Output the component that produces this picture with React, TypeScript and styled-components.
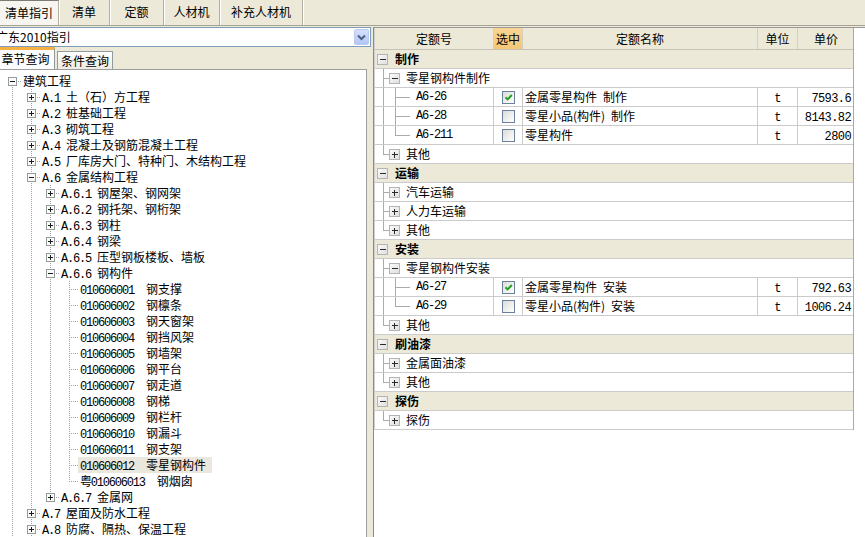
import React from "react"
import styled, { createGlobalStyle, css } from "styled-components"

const CJK = `"Noto Sans CJK SC", "Liberation Sans", sans-serif`
const MONO = `"Liberation Mono", "DejaVu Sans Mono", "Noto Sans CJK SC", monospace`

const GlobalStyle = createGlobalStyle`
  html, body {
    margin: 0;
    padding: 0;
    background: #ece9d8;
  }
  body {
    font-family: ${CJK};
    font-size: 12px;
    color: #000;
  }
`

/* ---------- data ---------- */

type TNode = {
  code?: string
  gap?: number
  name: string
  closed?: boolean
  kids?: TNode[]
  more?: boolean
  selected?: boolean
}

const leaf = (code: string, name: string, selected?: boolean): TNode => ({ code, name, gap: 12, selected })

const leftTree: TNode[] = [
  {
    name: "建筑工程",
    more: true,
    kids: [
      { code: "A.1", name: "土（石）方工程", closed: true },
      { code: "A.2", name: "桩基础工程", closed: true },
      { code: "A.3", name: "砌筑工程", closed: true },
      { code: "A.4", name: "混凝土及钢筋混凝土工程", closed: true },
      { code: "A.5", name: "厂库房大门、特种门、木结构工程", closed: true },
      {
        code: "A.6",
        name: "金属结构工程",
        kids: [
          { code: "A.6.1", name: "钢屋架、钢网架", closed: true },
          { code: "A.6.2", name: "钢托架、钢桁架", closed: true },
          { code: "A.6.3", name: "钢柱", closed: true },
          { code: "A.6.4", name: "钢梁", closed: true },
          { code: "A.6.5", name: "压型钢板楼板、墙板", closed: true },
          {
            code: "A.6.6",
            name: "钢构件",
            kids: [
              leaf("010606001", "钢支撑"),
              leaf("010606002", "钢檩条"),
              leaf("010606003", "钢天窗架"),
              leaf("010606004", "钢挡风架"),
              leaf("010606005", "钢墙架"),
              leaf("010606006", "钢平台"),
              leaf("010606007", "钢走道"),
              leaf("010606008", "钢梯"),
              leaf("010606009", "钢栏杆"),
              leaf("010606010", "钢漏斗"),
              leaf("010606011", "钢支架"),
              leaf("010606012", "零星钢构件", true),
              leaf("粤010606013", "钢烟囱"),
            ],
          },
          { code: "A.6.7", name: "金属网", closed: true },
        ],
      },
      { code: "A.7", name: "屋面及防水工程", closed: true },
      { code: "A.8", name: "防腐、隔热、保温工程", closed: true },
    ],
  },
]

type Flat = { n: TNode; pipes: boolean[]; last: boolean; first: boolean }

function flatten(list: TNode[], pipes: boolean[], more: boolean): Flat[] {
  const out: Flat[] = []
  list.forEach((n, i) => {
    const last = i === list.length - 1 && !more
    out.push({ n, pipes, last, first: pipes.length === 0 && i === 0 })
    if (n.kids) out.push(...flatten(n.kids, [...pipes, !last], !!n.more))
  })
  return out
}

type RRow =
  | { t: "group"; name: string }
  | { t: "sub"; name: string; open?: boolean; last?: boolean }
  | { t: "leaf"; code: string; name: string; checked?: boolean; unit: string; price: string; pipe: boolean; last?: boolean }

const rightRows: RRow[] = [
  { t: "group", name: "制作" },
  { t: "sub", name: "零星钢构件制作", open: true },
  { t: "leaf", code: "A6-26", name: "金属零星构件\u2002制作", checked: true, unit: "t", price: "7593.6", pipe: true },
  { t: "leaf", code: "A6-28", name: "零星小品(构件)\u2002制作", unit: "t", price: "8143.82", pipe: true },
  { t: "leaf", code: "A6-211", name: "零星构件", unit: "t", price: "2800", pipe: true, last: true },
  { t: "sub", name: "其他", last: true },
  { t: "group", name: "运输" },
  { t: "sub", name: "汽车运输" },
  { t: "sub", name: "人力车运输" },
  { t: "sub", name: "其他", last: true },
  { t: "group", name: "安装" },
  { t: "sub", name: "零星钢构件安装", open: true },
  { t: "leaf", code: "A6-27", name: "金属零星构件\u2002安装", checked: true, unit: "t", price: "792.63", pipe: true },
  { t: "leaf", code: "A6-29", name: "零星小品(构件)\u2002安装", unit: "t", price: "1006.24", pipe: true, last: true },
  { t: "sub", name: "其他", last: true },
  { t: "group", name: "刷油漆" },
  { t: "sub", name: "金属面油漆" },
  { t: "sub", name: "其他", last: true },
  { t: "group", name: "探伤" },
  { t: "sub", name: "探伤", last: true },
]

const topTabs = [
  { label: "清单指引", w: 59 },
  { label: "清单", w: 51 },
  { label: "定额", w: 54 },
  { label: "人材机", w: 56 },
  { label: "补充人材机", w: 83 },
]

/* ---------- small drawings ---------- */

const TreeBox9 = ({ open }: { open: boolean }) => (
  <svg width="9" height="9" viewBox="0 0 9 9" shapeRendering="crispEdges">
    <rect x="0.5" y="0.5" width="8" height="8" fill="#fbfbf9" stroke="#919b9c" />
    <path d="M2 4.5h5" stroke="#1b1b1b" />
    {!open && <path d="M4.5 2v5" stroke="#1b1b1b" />}
  </svg>
)

const GridBox = ({ open }: { open: boolean }) => (
  <svg width="11" height="11" viewBox="0 0 11 11" shapeRendering="crispEdges">
    <defs>
      <linearGradient id="gbx" x1="0" y1="0" x2="1" y2="1">
        <stop offset="0" stopColor="#fbfbfb" />
        <stop offset="1" stopColor="#dedede" />
      </linearGradient>
    </defs>
    <rect x="0.5" y="0.5" width="10" height="10" fill="url(#gbx)" stroke="#b4b4b4" />
    <path d="M2.5 5.5h6" stroke="#2a2a2a" />
    {!open && <path d="M5.5 2.5v6" stroke="#2a2a2a" />}
  </svg>
)

const Check = () => (
  <svg width="11" height="11" viewBox="0 0 11 11">
    <path d="M2.5 5.2 L4.6 7.4 L8.8 3" fill="none" stroke="#21a121" strokeWidth="2" />
  </svg>
)

const Chevron = () => (
  <svg width="9" height="7" viewBox="0 0 9 7">
    <path d="M1 1.5 L4.5 5 L8 1.5" fill="none" stroke="#4d6185" strokeWidth="2" />
  </svg>
)

/* ---------- layout ---------- */

const Page = styled.div`
  width: 865px;
  height: 537px;
  display: flex;
  flex-direction: column;
  background: #ece9d8;
  overflow: hidden;
`

const TopBar = styled.div`
  display: flex;
  height: 26px;
  box-sizing: border-box;
  border-bottom: 1px solid #a5a296;
`

const TopTab = styled.div<{ $w: number; $active?: boolean }>`
  width: ${(p) => p.$w}px;
  flex-shrink: 0;
  box-sizing: border-box;
  border-right: 1px solid #b3b0a3;
  box-shadow: 1px 0 0 #fff;
  text-align: center;
  line-height: 24px;
  font-size: 12px;
  ${(p) =>
    p.$active &&
    css`
      background: #f6f5ef;
      border-top: 1px solid #7d7b72;
      line-height: 23px;
    `}
`

const Body = styled.div`
  flex: 1;
  display: flex;
  padding-top: 1px;
  min-height: 0;
`

const LeftPane = styled.div`
  width: 371px;
  flex-shrink: 0;
  display: flex;
  flex-direction: column;
`

const Combo = styled.div`
  height: 20px;
  box-sizing: border-box;
  border: 1px solid #7f9db9;
  border-left: none;
  background: #fff;
  display: flex;
  align-items: center;
  overflow: hidden;
`

const ComboText = styled.span`
  flex: 1;
  margin-left: -4px;
  line-height: 18px;
  white-space: nowrap;
`

const ComboButton = styled.span`
  width: 15px;
  height: 16px;
  margin-right: 1px;
  box-sizing: border-box;
  border: 1px solid #b9c9ef;
  border-radius: 2px;
  background: linear-gradient(#d6e0fc, #b2c6f6);
  display: flex;
  align-items: center;
  justify-content: center;
`

const SubTabs = styled.div`
  height: 22px;
  display: flex;
  align-items: flex-end;
`

const SubTab = styled.div<{ $active?: boolean }>`
  box-sizing: border-box;
  text-align: center;
  font-size: 12px;
  ${(p) =>
    p.$active
      ? css`
          width: 58px;
          height: 22px;
          margin-left: -3px;
          background: #fcfcfe;
          border-top: 3px solid #f5b143;
          border-right: 1px solid #919b9c;
          line-height: 18px;
        `
      : css`
          width: 56px;
          height: 18px;
          margin-left: 2px;
          background: linear-gradient(#fefefe, #ecebe5);
          border: 1px solid #919b9c;
          border-bottom: none;
          line-height: 17px;
        `}
`

const TreeBox = styled.div`
  flex: 1;
  width: 367px;
  box-sizing: border-box;
  background: #fff;
  border-top: 1px solid #9d9d9d;
  border-right: 1px solid #9d9d9d;
  padding: 3px 0 0 3px;
  overflow: hidden;
`

const TreeRow = styled.div`
  display: flex;
  height: 16px;
  align-items: center;
  white-space: nowrap;
`

const dotColor = "#a3a3a3"
const vDots = `repeating-linear-gradient(to bottom, ${dotColor} 0 1px, transparent 1px 2px)`
const hDots = `repeating-linear-gradient(to right, ${dotColor} 0 1px, transparent 1px 2px)`

type GuideKind = "none" | "pipe" | "tee" | "elbow" | "first"

const dottedGuides: Record<GuideKind, string> = {
  none: "none",
  pipe: `${vDots} 9px 0 / 1px 100% no-repeat`,
  tee: `${vDots} 9px 0 / 1px 100% no-repeat, ${hDots} 9px 8px / 10px 1px no-repeat`,
  elbow: `${vDots} 9px 0 / 1px 9px no-repeat, ${hDots} 9px 8px / 10px 1px no-repeat`,
  first: `${vDots} 9px 8px / 1px 8px no-repeat, ${hDots} 9px 8px / 10px 1px no-repeat`,
}

const Guide = styled.span<{ $kind: GuideKind }>`
  width: 19px;
  height: 16px;
  flex-shrink: 0;
  display: flex;
  align-items: center;
  background: ${(p) => dottedGuides[p.$kind]};
  svg {
    margin-left: 5px;
    display: block;
  }
`

const Label = styled.span<{ $selected?: boolean }>`
  margin-left: -1px;
  padding: 0 6px 0 2px;
  line-height: 16px;
  height: 16px;
  background: ${(p) => (p.$selected ? "#eae8de" : "transparent")};
`

const Code = styled.span<{ $gap: number }>`
  font-family: ${MONO};
  font-size: 12px;
  letter-spacing: -1.2px;
  margin-right: ${(p) => p.$gap}px;
`

/* ---------- right grid ---------- */

const RightPane = styled.div`
  flex: 1;
  margin-left: 2px;
  background: #fff;
  border-left: 1px solid #8b8b8b;
  border-top: 1px solid #9a9a9a;
  overflow: hidden;
`

const Grid = styled.div`
  width: 480px;
  box-sizing: border-box;
  border-left: 1px solid #cfcfcf;
  border-right: 1px solid #a9a9a9;
`

const HeaderRow = styled.div`
  display: flex;
  height: 22px;
  box-sizing: border-box;
  background: #ece9d8;
  border-bottom: 1px solid #c6c3b6;
`

const HCell = styled.div<{ $w: number; $hot?: boolean }>`
  width: ${(p) => p.$w}px;
  flex-shrink: 0;
  box-sizing: border-box;
  text-align: center;
  line-height: 21px;
  & + & {
    border-left: 1px solid #d3d0c3;
  }
  ${(p) =>
    p.$hot &&
    css`
      background: linear-gradient(#fad595, #f4c678);
    `}
`

const GridRow = styled.div<{ $group?: boolean }>`
  display: flex;
  height: 19px;
  box-sizing: border-box;
  border-bottom: 1px solid #cbcbcb;
  background: ${(p) => (p.$group ? "#ece9d8" : "#fff")};
  white-space: nowrap;
`

const TreePart = styled.div<{ $fixed?: boolean }>`
  display: flex;
  align-items: center;
  height: 18px;
  padding-left: 2px;
  box-sizing: border-box;
  ${(p) => (p.$fixed ? "width: 118px; flex-shrink: 0;" : "flex: 1;")}
`

type SolidKind = "none" | "pipe" | "tee" | "elbow" | "stub"
const lineColor = "#ababab"
const solid = `linear-gradient(${lineColor}, ${lineColor})`

const solidGuides: Record<SolidKind, string> = {
  none: "none",
  pipe: `${solid} 6px 0 / 1px 100% no-repeat`,
  tee: `${solid} 6px 0 / 1px 100% no-repeat, ${solid} 6px 9px / 6px 1px no-repeat`,
  elbow: `${solid} 6px 0 / 1px 10px no-repeat, ${solid} 6px 9px / 6px 1px no-repeat`,
  stub: `${solid} 0 9px / 100% 1px no-repeat`,
}

const RGuide = styled.span<{ $kind: SolidKind; $w?: number }>`
  width: ${(p) => p.$w ?? 12}px;
  height: 18px;
  flex-shrink: 0;
  display: flex;
  align-items: center;
  background: ${(p) => solidGuides[p.$kind]};
  svg {
    display: block;
  }
`

const RText = styled.span<{ $bold?: boolean; $pad: number }>`
  padding-left: ${(p) => p.$pad}px;
  line-height: 18px;
  font-weight: ${(p) => (p.$bold ? 700 : 400)};
`

const RCode = styled.span`
  padding-left: 6px;
  font-family: ${MONO};
  font-size: 12px;
  letter-spacing: -1.2px;
  line-height: 18px;
`

const Cell = styled.div<{ $w: number; $align?: "left" | "center" | "right" }>`
  width: ${(p) => p.$w}px;
  flex-shrink: 0;
  box-sizing: border-box;
  border-left: 1px solid #cbcbcb;
  height: 18px;
  line-height: 18px;
  text-align: ${(p) => p.$align ?? "left"};
  padding: ${(p) => (p.$align === "right" ? "0 3px 0 0" : p.$align === "center" ? "0" : "0 0 0 2px")};
`

const NumText = styled.span`
  font-family: ${MONO};
  font-size: 12px;
  letter-spacing: -0.6px;
`

const CheckCell = styled.div`
  width: 29px;
  flex-shrink: 0;
  box-sizing: border-box;
  border-left: 1px solid #cbcbcb;
  height: 18px;
  display: flex;
  align-items: center;
  justify-content: center;
`

const CheckBox = styled.span`
  width: 13px;
  height: 13px;
  box-sizing: border-box;
  border: 1px solid #6a809c;
  background: linear-gradient(135deg, #dcdcd6, #ffffff);
  display: flex;
  align-items: center;
  justify-content: center;
  svg {
    display: block;
  }
`

/* ---------- components ---------- */

const LeftTree = () => {
  const rows = flatten(leftTree, [], true)
  return (
    <TreeBox>
      {rows.map(({ n, pipes, last, first }, i) => {
        const kind: GuideKind = first ? "first" : last ? "elbow" : "tee"
        const hasBox = !!n.kids || !!n.closed
        return (
          <TreeRow key={i}>
            {pipes.map((p, j) => (
              <Guide key={j} $kind={p ? "pipe" : "none"} />
            ))}
            <Guide $kind={kind}>{hasBox && <TreeBox9 open={!!n.kids} />}</Guide>
            <Label $selected={n.selected}>
              {n.code && <Code $gap={n.gap ?? 6}>{n.code}</Code>}
              {n.name}
            </Label>
          </TreeRow>
        )
      })}
    </TreeBox>
  )
}

const RightGrid = () => (
  <RightPane>
    <Grid>
      <HeaderRow>
        <HCell $w={118}>定额号</HCell>
        <HCell $w={29} $hot>
          选中
        </HCell>
        <HCell $w={235}>定额名称</HCell>
        <HCell $w={40}>单位</HCell>
        <HCell $w={57}>单价</HCell>
      </HeaderRow>
      {rightRows.map((r, i) => {
        if (r.t === "group")
          return (
            <GridRow key={i} $group>
              <TreePart>
                <RGuide $kind="none">
                  <GridBox open />
                </RGuide>
                <RText $bold $pad={6}>
                  {r.name}
                </RText>
              </TreePart>
            </GridRow>
          )
        if (r.t === "sub")
          return (
            <GridRow key={i}>
              <TreePart>
                <RGuide $kind={r.last ? "elbow" : "tee"} />
                <RGuide $kind="none">
                  <GridBox open={!!r.open} />
                </RGuide>
                <RText $pad={5}>{r.name}</RText>
              </TreePart>
            </GridRow>
          )
        return (
          <GridRow key={i}>
            <TreePart $fixed>
              <RGuide $kind={r.pipe ? "pipe" : "none"} />
              <RGuide $kind={r.last ? "elbow" : "tee"} />
              <RGuide $kind="stub" $w={9} />
              <RCode>{r.code}</RCode>
            </TreePart>
            <CheckCell>
              <CheckBox>{r.checked && <Check />}</CheckBox>
            </CheckCell>
            <Cell $w={235}>{r.name}</Cell>
            <Cell $w={40} $align="center">
              <NumText>{r.unit}</NumText>
            </Cell>
            <Cell $w={57} $align="right">
              <NumText>{r.price}</NumText>
            </Cell>
          </GridRow>
        )
      })}
    </Grid>
  </RightPane>
)

const App = () => (
  <Page>
    <GlobalStyle />
    <TopBar>
      {topTabs.map((t, i) => (
        <TopTab key={t.label} $w={t.w} $active={i === 0}>
          {t.label}
        </TopTab>
      ))}
    </TopBar>
    <Body>
      <LeftPane>
        <Combo>
          <ComboText>广东2010指引</ComboText>
          <ComboButton>
            <Chevron />
          </ComboButton>
        </Combo>
        <SubTabs>
          <SubTab $active>章节查询</SubTab>
          <SubTab>条件查询</SubTab>
        </SubTabs>
        <LeftTree />
      </LeftPane>
      <RightGrid />
    </Body>
  </Page>
)

export default App
